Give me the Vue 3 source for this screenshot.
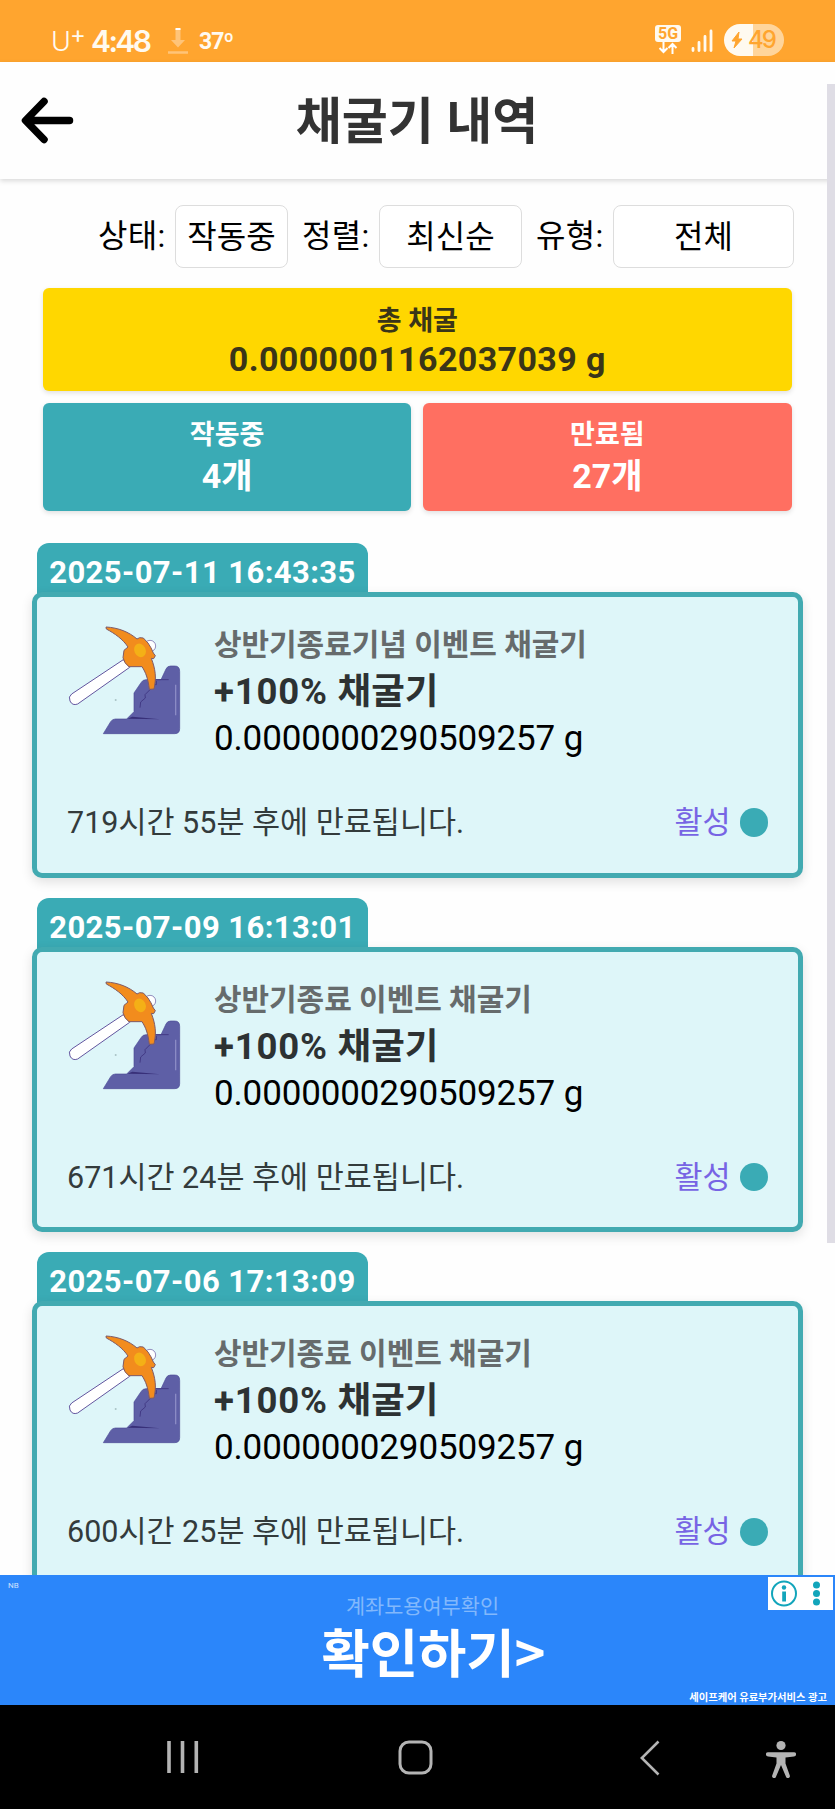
<script setup>
const filters = [
  { label: '상태:', value: '작동중', size: 'narrow' },
  { label: '정렬:', value: '최신순', size: 'medium' },
  { label: '유형:', value: '전체', size: 'wide' },
]
const miners = [
  { date: '2025-07-11 16:43:35', title: '상반기종료기념 이벤트 채굴기', left: '719시간 55분 후에 만료됩니다.' },
  { date: '2025-07-09 16:13:01', title: '상반기종료 이벤트 채굴기', left: '671시간 24분 후에 만료됩니다.' },
  { date: '2025-07-06 17:13:09', title: '상반기종료 이벤트 채굴기', left: '600시간 25분 후에 만료됩니다.' },
]
</script>

<template>
  <div class="phone">
    <div class="status">
      <div class="status-left">
        <span class="carrier">U<sup>+</sup></span>
        <span class="clock">4:48</span>
        <svg class="download" width="20" height="28" viewBox="0 0 20 28">
          <path d="M7.500 2h5v11h4.500L10 20.500 3 13h4.500z" fill="#ffc478" />
          <path d="M7.500 1h5v2h-5z" fill="#fff" />
          <path d="M0 25.500h20" stroke="#ffc478" stroke-width="2.500" />
        </svg>
        <span class="temp">37º</span>
      </div>
      <div class="status-right">
        <div class="network">
          <span class="five-g">5G</span>
          <svg width="20" height="12" viewBox="0 0 20 12" fill="none" stroke="#fff" stroke-width="2">
            <path d="M5.500 0v10M1.500 6l4 4 4-4M14.500 12V2M10.500 6l4-4 4 4" />
          </svg>
        </div>
        <svg class="signal" width="22" height="24" viewBox="0 0 22 24" stroke="#fffaf0" stroke-width="2.800" stroke-linecap="round">
          <path d="M2 19.500v2M8 13.500v8M14 7.500v14M20 2v19.500" />
        </svg>
        <div class="battery">
          <svg width="12" height="18" viewBox="0 0 12 18"><path d="M8 1 1 10h4l-2 7 8-9H7z" fill="#ffa52f" stroke="#ffa52f" stroke-linejoin="round" /></svg>
          <span>49</span>
        </div>
      </div>
    </div>

    <header class="header">
      <svg class="back" width="54" height="48" viewBox="0 0 54 48" fill="none" stroke="#000" stroke-width="7.500" stroke-linecap="round" stroke-linejoin="round">
        <path d="M24 5.500 5.500 24.500 24 43.500M6 24.500h43.500" />
      </svg>
      <h1>채굴기 내역</h1>
    </header>

    <main class="content">
      <div class="filters">
        <template v-for="f in filters" :key="f.label">
          <span class="filter-label">{{ f.label }}</span>
          <div class="select" :class="f.size">{{ f.value }}</div>
        </template>
      </div>

      <div class="total">
        <div class="stat-label">총 채굴</div>
        <div class="total-value">0.0000001162037039 g</div>
      </div>
      <div class="stats">
        <div class="stat running">
          <div class="stat-label">작동중</div>
          <div class="stat-value">4개</div>
        </div>
        <div class="stat expired">
          <div class="stat-label">만료됨</div>
          <div class="stat-value">27개</div>
        </div>
      </div>

      <section v-for="m in miners" :key="m.date" class="miner">
        <div class="tab">{{ m.date }}</div>
        <div class="card">
          <div class="card-top">
            <svg width="130" height="130" viewBox="0 0 390 390">
              <path d="M130 356 152 320Q157 312 166 312H200L222 290V234L243 203Q248 194 258 194H303L318 162Q322 153 332 153H344Q359 153 359 169V341Q359 356 344 356Z" fill="#5e5fa6" stroke="#4b4a96" stroke-width="2" />
              <path d="M283 194H326M272 222 255 239 256 249 242 261 240 278M289 198v11h-8" fill="none" stroke="#423a85" stroke-width="3" />
              <path d="M202 311 217 305 300 313Z" fill="#383079" />
              <path d="M347 209v92" stroke="#8b8bc5" stroke-width="4" />
              <circle cx="270" cy="93" r="17" fill="#fff" stroke="#63569f" stroke-width="2" />
              <path d="M190 134 35 237Q24 245 30 258 37 273 53 267L209 157Z" fill="#fff" stroke="#63569f" stroke-width="3" />
              <path d="M138 36C175 38 207 51 231 72L239 68 250 69 264 84Q274 98 280 114L286 122 281 131 274 130C286 162 290 187 282 222L268 223C264 190 257 172 246 155L207 155Q192 145 189 128L192 106 204 96C188 72 165 56 139 42Z" fill="#f28c1d" stroke="#7d5a68" stroke-width="3" stroke-linejoin="round" />
              <ellipse cx="240" cy="106" rx="17" ry="21" fill="#f4b016" transform="rotate(-25 240 106)" />
              <circle cx="167" cy="255" r="3" fill="#a9c2c6" />
            </svg>
            <div class="info">
              <div class="title">{{ m.title }}</div>
              <div class="bonus"><span class="percent">+100% </span>채굴기</div>
              <div class="amount">0.0000000290509257 g</div>
            </div>
          </div>
          <div class="card-foot">
            <span class="remain">{{ m.left }}</span>
            <span class="active">활성</span>
            <i class="dot"></i>
          </div>
        </div>
      </section>
    </main>

    <div class="ad">
      <span class="ad-mark">NB</span>
      <div class="ad-sub">계좌도용여부확인</div>
      <div class="ad-title">확인하기<span class="gt">&gt;</span></div>
      <div class="ad-note">세이프케어 유료부가서비스 광고</div>
      <div class="ad-choices">
        <svg width="65" height="33" viewBox="0 0 65 33" fill="#12a5bb">
          <circle cx="16" cy="16.500" r="12" fill="none" stroke="#12a5bb" stroke-width="2" />
          <circle cx="16" cy="10.500" r="2.200" /><path d="M14.200 14.500h3.800v10h-3.800z" />
          <circle cx="48.500" cy="8" r="3.500" /><circle cx="48.500" cy="16.500" r="3.500" /><circle cx="48.500" cy="25" r="3.500" />
        </svg>
      </div>
    </div>

    <nav class="nav">
      <svg class="recents" width="32" height="34" viewBox="0 0 32 34" stroke="#b4b4b4" stroke-width="3.600"><path d="M2 1v32M15.500 1v32M29.300 1v32" /></svg>
      <svg class="home" width="36" height="36" viewBox="0 0 36 36"><rect x="2" y="2" width="31" height="31" rx="9" fill="none" stroke="#b4b4b4" stroke-width="3" /></svg>
      <svg class="prev" width="20" height="36" viewBox="0 0 20 36"><path d="M18.500 1.500 1.800 18l16.700 16.500" fill="none" stroke="#b4b4b4" stroke-width="2.600" /></svg>
      <svg class="access" width="30" height="38" viewBox="0 0 30 38" fill="#b4b4b4">
        <circle cx="15" cy="5.500" r="4.600" />
        <path d="M2 12.200h26a2 2 0 0 1 0 4.200l-8.500 1v6l4.300 12a2 2 0 0 1-3.700 1.500L15 25l-5.100 11.900a2 2 0 0 1-3.700-1.500l4.300-12v-6l-8.500-1a2 2 0 0 1 0-4.200z" />
      </svg>
    </nav>
    <div class="scrollbar"></div>
  </div>
</template>

<style>
body {
  margin: 0;
}
</style>

<style scoped>
.phone {
  position: relative;
  width: 835px;
  height: 1809px;
  overflow: hidden;
  display: flex;
  flex-direction: column;
  background: #fefefe;
  font-family: Roboto, "Noto Sans CJK KR", sans-serif;
  white-space: nowrap;
}
.phone svg { display: block; flex: none; }
.status {
  height: 62px;
  flex: none;
  box-sizing: border-box;
  background: #ffa52f;
  color: #fffaf0;
  display: flex;
  justify-content: space-between;
  padding: 24px 51px 0 51px;
}
.status-left, .status-right { display: flex; align-items: flex-start; height: 34px; }
.carrier { font: 300 27px/36px Inter, sans-serif; width: 40px; }
.carrier sup { font-size: 24px; line-height: 0; vertical-align: 8px; font-weight: 400; margin-left: -1px; }
.clock { font: 600 30px/34px Inter, sans-serif; width: 77px; letter-spacing: -2.600px; }
.download { margin-top: 3px; }
.temp { font: 700 23px/36px Roboto, sans-serif; margin-left: 11px; letter-spacing: -1px; }
.network { width: 26px; margin-top: 1px; display: flex; flex-direction: column; align-items: center; }
.five-g { width: 26px; height: 16.500px; border-radius: 3px; background: #fffaf0; color: #ffa52f; font: 700 16px/17px Roboto, sans-serif; text-align: center; }
.signal { margin: 5px 11px 0 10px; }
.battery {
  width: 60px;
  height: 32px;
  border-radius: 16px;
  background: linear-gradient(90deg, #fffaf0 0 49%, #ffd59b 49%);
  display: flex;
  align-items: center;
  color: #ffa52f;
  box-sizing: border-box;
  padding-left: 7px;
  gap: 5px;
  font: 500 24px/32px Inter, sans-serif;
  letter-spacing: -2px;
}
.header {
  height: 117px;
  flex: none;
  position: relative;
  z-index: 1;
  background: #fefefe;
  box-shadow: 0 2px 5px rgba(0, 0, 0, .15);
  display: flex;
  align-items: center;
  padding-left: 20px;
}
.back { margin-top: -1px; }
.header h1 { flex: 1; margin: 3px 75px 0 0; text-align: center; font-size: 50px; line-height: 60px; font-weight: 700; color: #333; }
.content { height: 1396px; flex: none; overflow: hidden; box-sizing: border-box; padding: 26px 32px 0 32px; }
.filters { display: flex; align-items: center; justify-content: flex-end; height: 63px; padding-right: 9px; }
.filter-label { font-size: 32px; line-height: 63px; margin-right: 9.500px; letter-spacing: .3px; }
.select { box-sizing: border-box; height: 63px; border: 1px solid #ddd; border-radius: 8px; text-align: center; font-size: 32px; line-height: 62px; margin-right: 14px; background: #fff; }
.select:last-child { margin-right: 0; }
.narrow { width: 113px; }
.medium { width: 143px; }
.wide { width: 181px; }
.total, .stat { border-radius: 6px; text-align: center; box-sizing: border-box; box-shadow: 0 2px 5px rgba(0, 0, 0, .12); font-weight: 700; }
.total { margin: 20px 11.500px 0 11px; height: 103px; padding-top: 14px; background: #ffd700; color: #3a3518; }
.stat-label { font-size: 27px; line-height: 38px; }
.total-value { font-size: 34px; line-height: 39px; letter-spacing: .38px; }
.stats { display: grid; grid-template-columns: 1fr 1fr; gap: 12px; margin: 12px 11.500px 0 11px; }
.stat { height: 108px; padding-top: 13px; color: #fff; }
.stat-value { font-size: 34px; line-height: 44px; }
.running { background: #3aabb5; }
.expired { background: #ff6f61; }
.miner { margin-top: 20.200px; }
.stats + .miner { margin-top: 32px; }
.tab { margin: 0 0 -5px 5px; width: 331px; height: 54px; box-sizing: border-box; padding-top: 10px; background: #3aabb5; color: #fff; border-radius: 12px 12px 0 0; font-size: 31px; line-height: 39px; font-weight: 700; text-align: center; letter-spacing: .42px; }
.card { height: 285.500px; box-sizing: border-box; border: 5px solid #42aab1; border-radius: 10px; background: #def6f9; box-shadow: 0 4px 12px rgba(0, 0, 0, .12); padding: 18px 30px 0 23px; }
.card-top { display: flex; gap: 24px; height: 146px; }
.info { padding-top: 7px; }
.info > div { line-height: 46px; }
.title { font-size: 30px; font-weight: 700; color: #666b6c; letter-spacing: -.06px; }
.info > .bonus { font-size: 36.500px; line-height: 48px; font-weight: 700; color: #2d3233; }
.percent { letter-spacing: .8px; }
.amount { font-size: 35px; color: #000; letter-spacing: -.14px; }
.card-foot { display: flex; align-items: center; height: 46px; margin-top: 39px; padding-left: 7px; font-size: 30.500px; line-height: 46px; color: #333b3c; }
.active { margin-left: auto; color: #7764e4; }
.dot { width: 28.500px; height: 28.500px; border-radius: 50%; background: #3aabb5; margin: -1px 0 0 9px; }
.scrollbar { position: absolute; z-index: 2; right: 0; top: 84px; width: 8px; height: 1159px; background: #dfdde5; }
.ad { position: relative; flex: none; height: 129.500px; background: #2b86fa; color: #fff; text-align: center; overflow: hidden; }
.ad-mark { position: absolute; left: 8px; top: 6px; font-size: 8px; line-height: 10px; opacity: .75; }
.ad-sub { padding-top: 19px; font-size: 20.800px; line-height: 26px; color: #82b8fc; padding-left: 10px; }
.ad-title { font-size: 52.500px; line-height: 61px; font-weight: 700; padding-left: 32px; }
.gt { font-family: "Noto Sans CJK KR", sans-serif; }
.ad-note { position: absolute; right: 8px; bottom: 0; font-size: 10.300px; line-height: 14px; font-weight: 700; }
.ad-choices { position: absolute; right: 2px; top: 2px; width: 65px; height: 33px; background: #fff; }
.nav { flex: 1; background: #000; display: flex; align-items: flex-start; padding: 36px 39px 0 167px; }
.recents { margin-top: -1px; }
.home { margin: -1px 0 0 199px; }
.prev { margin: -1px 0 0 206px; }
.access { margin: -1px 0 0 auto; }
</style>
